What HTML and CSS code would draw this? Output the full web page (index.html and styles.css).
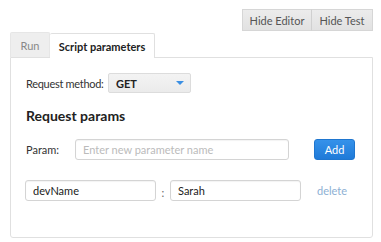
FILE: index.html
```html
<!DOCTYPE html>
<html lang="en">
<head>
  <meta charset="UTF-8">
  <title>Script parameters</title>
  <link rel="stylesheet" href="styles.css">
</head>
<body>

  <!-- Переключатели редактора и теста -->
  <div class="toolbar">
    <div class="btn-group">
      <button class="btn-light">Hide Editor</button>
      <button class="btn-light">Hide Test</button>
    </div>
  </div>

  <div class="tabs">
    <span class="tab">Run</span>
    <span class="tab active">Script parameters</span>
  </div>

  <section class="panel">
    <div class="method-row">
      <label for="method">Request method:</label>
      <div class="select" id="method">
        <span>GET</span>
        <span class="caret"></span>
      </div>
    </div>

    <h2>Request params</h2>

    <div class="param-row">
      <label for="paramName">Param:</label>
      <input type="text" id="paramName" class="field field-wide" placeholder="Enter new parameter name">
      <button class="btn-primary">Add</button>
    </div>

    <div class="kv-row">
      <input type="text" class="field field-kv" value="devName">
      <span class="colon">:</span>
      <input type="text" class="field field-kv" value="Sarah">
      <a href="#" class="delete">delete</a>
    </div>
  </section>

</body>
</html>
```

FILE: styles.css
```css
:root {
  --border-color: #e0e0e0;
  --input-border: #d4d4d4;
  --text-color: #333;
  --muted: #888;
  --primary: #2a86e2;
  --font-family: Lato, 'Open Sans', sans-serif;
}
* {
  box-sizing: border-box;
}
body {
  margin: 0;
  font-family: var(--font-family);
  font-size: 11px;
  color: var(--text-color);
  background: #fff;
}
/* Верхняя панель */
.toolbar {
  display: flex;
  justify-content: flex-end;
  padding: 9px 8px 0 0;
}
.btn-group {
  display: flex;
}
.btn-light {
  height: 22px;
  padding: 0;
  white-space: nowrap;
  font-family: var(--font-family);
  font-size: 11px;
  color: #555;
  background: linear-gradient(#ececec, #e2e2e2);
  border: 1px solid #d6d6d6;
  cursor: pointer;
}
.btn-light:first-child {
  width: 70px;
}
.btn-light + .btn-light {
  width: 62px;
  border-left: 1px solid #d0d0d0;
  margin-left: -1px;
}
/* Вкладки */
.tabs {
  display: flex;
  margin: 1px 0 0 10px;
  height: 25px;
}
.tab {
  display: flex;
  align-items: center;
  justify-content: center;
  width: 40px;
  color: var(--muted);
  background: #eeeeee;
  border: 1px solid #e6e6e6;
  border-bottom: none;
  border-radius: 2px 2px 0 0;
}
.tab.active {
  width: 105px;
  color: #222;
  font-weight: 700;
  background: #fff;
  border-color: var(--border-color);
  position: relative;
  top: 1px;
  border-left: none;
}
/* Панель параметров */
.panel {
  margin: 0 8px 0 10px;
  height: 181px;
  padding: 15px 15px 0 15px;
  border: 1px solid var(--border-color);
  border-radius: 0 0 3px 3px;
}
.method-row {
  display: flex;
  align-items: center;
}
.method-row label {
  width: 82px;
  white-space: nowrap;
  letter-spacing: -0.3px;
}
.select {
  display: flex;
  align-items: center;
  justify-content: space-between;
  width: 83px;
  height: 20px;
  padding: 0 6px 0 7px;
  font-weight: 700;
  color: #222;
  background: linear-gradient(#f3f3f3, #ebebeb);
  border: 1px solid #dcdcdc;
  border-radius: 2px;
}
.caret {
  width: 0;
  height: 0;
  border-left: 4px solid transparent;
  border-right: 4px solid transparent;
  border-top: 4px solid #3a8fe3;
}
.panel h2 {
  margin: 14px 0 0;
  font-size: 14px;
  font-weight: 700;
  line-height: 18px;
  color: #222;
}
.param-row {
  display: flex;
  align-items: center;
  margin-top: 14px;
}
.param-row label {
  width: 49px;
}
.field {
  height: 21px;
  padding: 0 7px;
  font-family: var(--font-family);
  font-size: 11px;
  color: #222;
  border: 1px solid var(--input-border);
  border-radius: 3px;
  box-shadow: inset 0 1px 1px rgba(0,0,0,0.05);
}
.field::placeholder {
  color: #bbb;
}
.field-wide {
  width: 214px;
}
.btn-primary {
  margin-left: 25px;
  width: 41px;
  height: 21px;
  font-family: var(--font-family);
  font-size: 11px;
  color: #fff;
  background: linear-gradient(#3592ea, #1f7ad8);
  border: 1px solid #1f76cf;
  border-radius: 3px;
  cursor: pointer;
}
.kv-row {
  display: flex;
  align-items: center;
  margin-top: 20px;
  margin-left: -1px;
}
.field-kv {
  width: 131px;
}
.colon {
  width: 14px;
  text-align: center;
  padding-top: 4px;
  color: #666;
}
.delete {
  margin-left: 16px;
  color: #8db0d4;
  text-decoration: none;
}
```
